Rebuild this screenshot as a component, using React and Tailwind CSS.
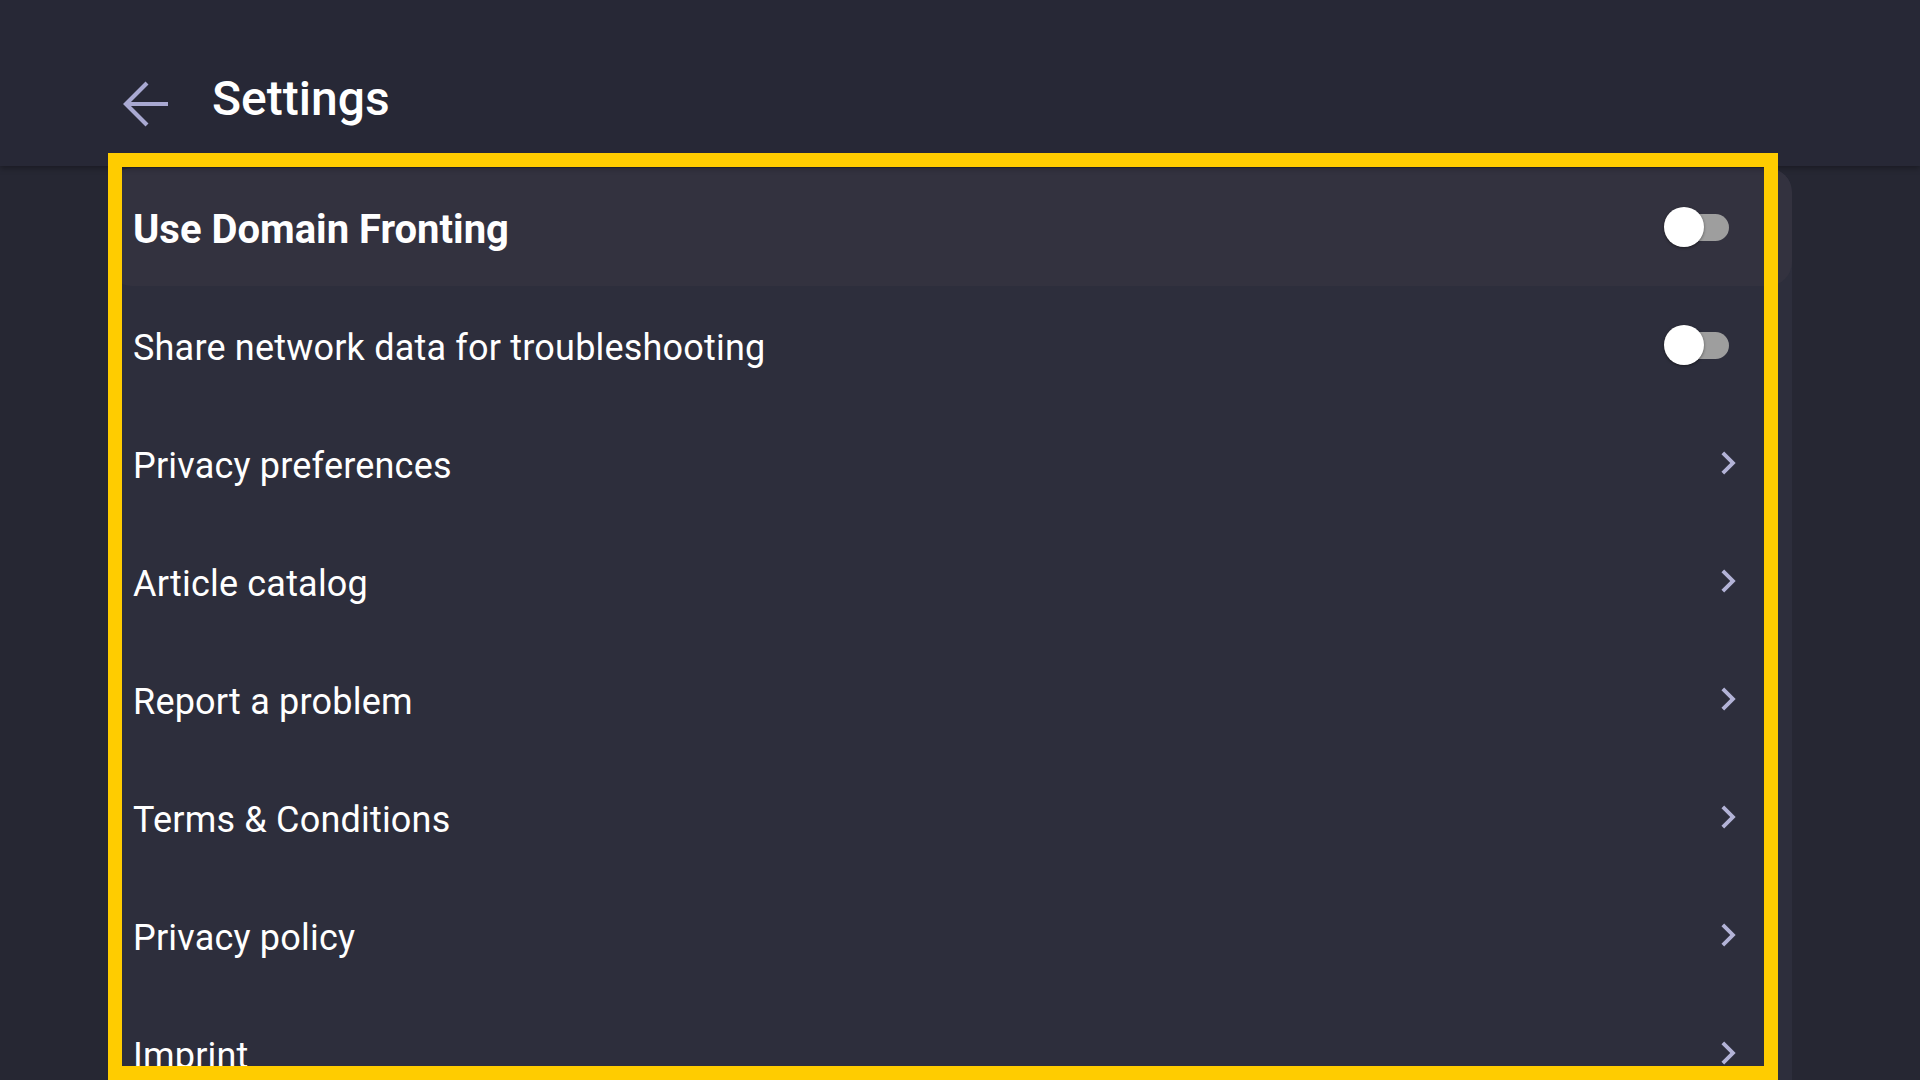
import React from "react";

function Toggle() {
  return (
    <div className="relative w-[65px] h-[40px] mr-[22px]">
      <div className="absolute right-0 top-[7px] h-[27px] w-[60px] rounded-full bg-[#9e9e9e]" />
      <div className="absolute left-0 top-0 h-[40px] w-[40px] rounded-full bg-white shadow-[0_1px_3px_rgba(0,0,0,0.45)]" />
    </div>
  );
}

function Chevron() {
  return (
    <svg viewBox="0 0 24 24" className="w-[46px] h-[46px]" fill="#b3b3d7">
      <path d="M10 6L8.59 7.41 13.17 12l-4.58 4.59L10 18l6-6z" />
    </svg>
  );
}

function Row({ label, kind, focused }) {
  return (
    <div
      className={
        "flex items-center justify-between h-[118px] shrink-0 pl-[25px] pr-[41px] " +
        (focused ? "bg-[#33323f] rounded-[24px]" : "")
      }
    >
      <span
        className={
          focused
            ? "mt-[5px] text-[40px] font-bold text-white leading-[48px]"
            : "mt-[5px] text-[36px] tracking-[0.2px] font-normal text-white leading-[44px]"
        }
      >
        {label}
      </span>
      {kind === "toggle" ? <Toggle /> : <Chevron />}
    </div>
  );
}

export default function App() {
  const rows = [
    { label: "Use Domain Fronting", kind: "toggle", focused: true },
    { label: "Share network data for troubleshooting", kind: "toggle" },
    { label: "Privacy preferences", kind: "chevron" },
    { label: "Article catalog", kind: "chevron" },
    { label: "Report a problem", kind: "chevron" },
    { label: "Terms & Conditions", kind: "chevron" },
    { label: "Privacy policy", kind: "chevron" },
    { label: "Imprint", kind: "chevron" },
  ];
  return (
    <div
      className="relative w-[1920px] h-[1080px] overflow-hidden bg-[#262733] text-white"
      style={{ fontFamily: "Roboto, 'Noto Sans', sans-serif" }}
    >
      <header className="relative z-10 h-[166px] bg-[#272836] shadow-[0_2px_6px_rgba(0,0,0,0.35)] flex items-start pt-[71px] pl-[122px]">
        <svg viewBox="0 0 48 48" className="w-[48px] h-[48px] mt-[9px]" fill="none" stroke="#a9a9d2" strokeWidth="4.2">
          <path d="M4 24H46" />
          <path d="M25 3L4 24L25 45" />
        </svg>
        <h1 className="ml-[42px] text-[48px] font-medium leading-[56px] text-white">Settings</h1>
      </header>
      <div className="mt-[2px] ml-[108px] w-[1684px] h-[912px] bg-[#2d2e3c] rounded-t-[24px] overflow-hidden flex flex-col">
        {rows.map((r) => (
          <Row key={r.label} {...r} />
        ))}
      </div>
      <div className="pointer-events-none absolute left-[108px] top-[153px] w-[1670px] h-[927px] border-[14px] border-[#ffcc00] z-20" />
    </div>
  );
}
